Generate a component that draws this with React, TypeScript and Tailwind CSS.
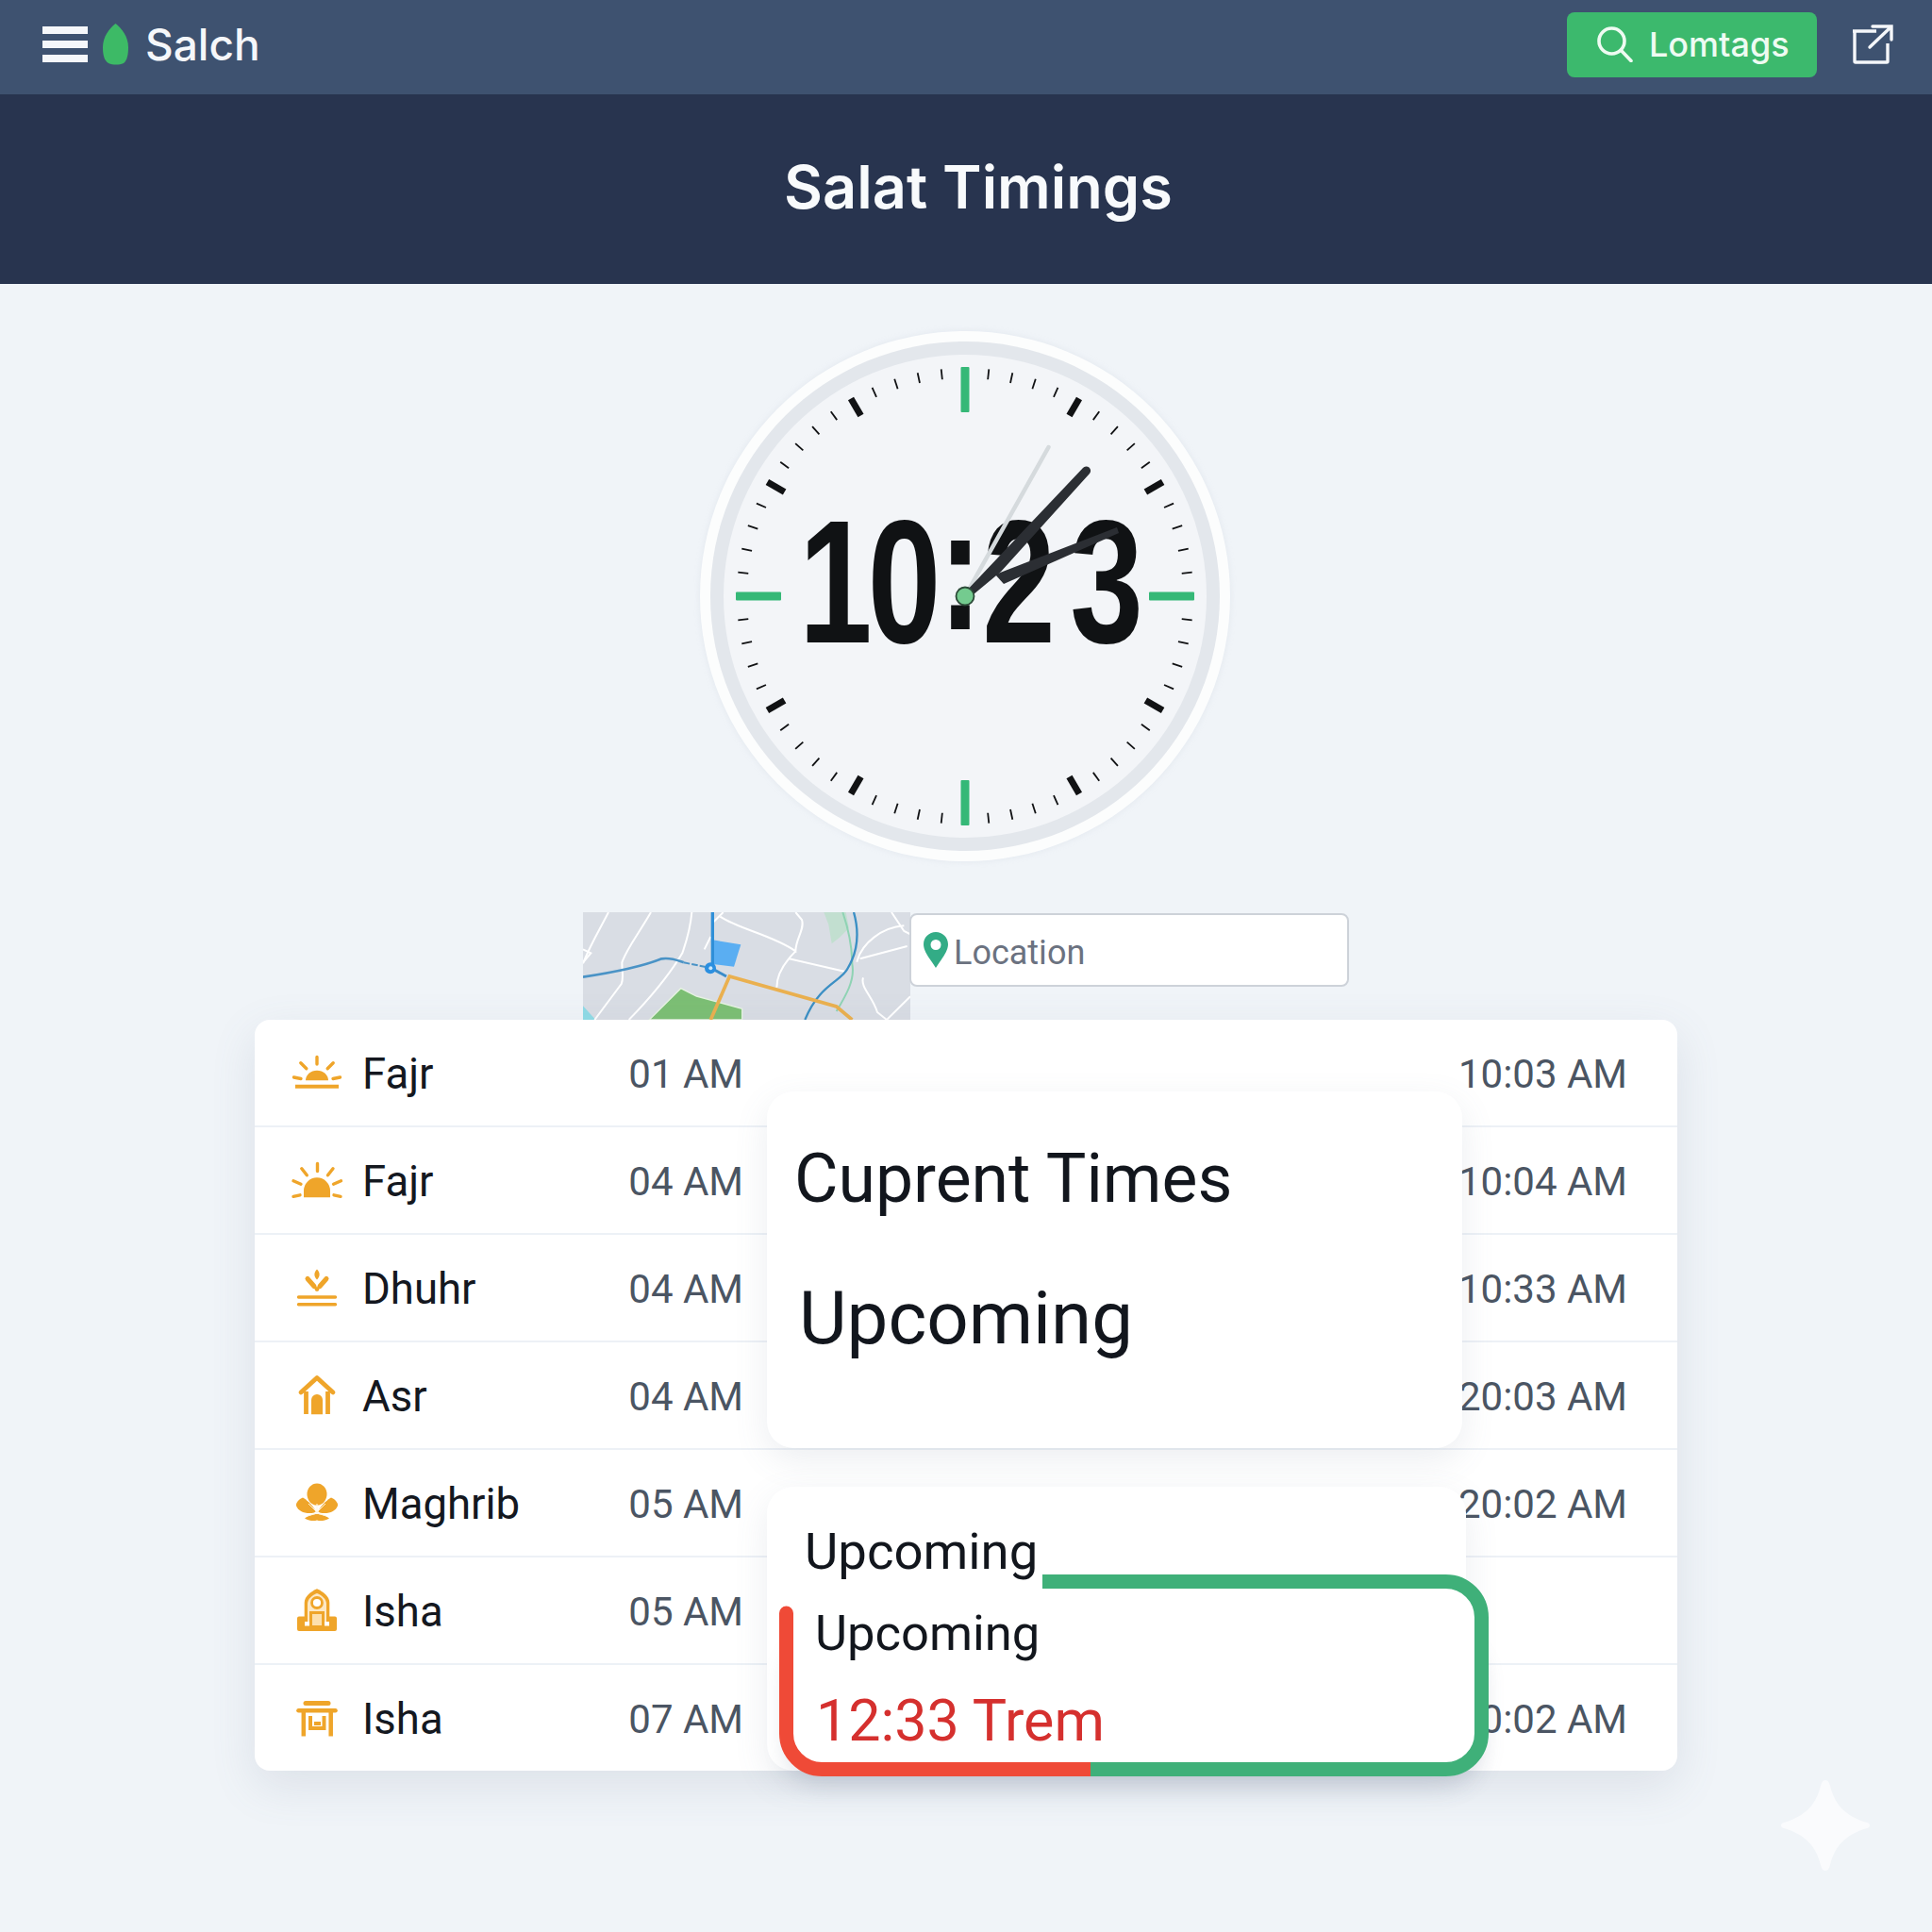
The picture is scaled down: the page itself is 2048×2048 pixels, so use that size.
import React from "react";

const amber = "#efa52a";

function IconFajr1() {
  return (
    <svg viewBox="0 0 60 60" className="w-[60px] h-[60px]" fill="none" stroke={amber} strokeLinecap="round" strokeWidth="3.4">
      <path d="M30 13.500v7.500M12.800 19.800l6 6M47.200 19.800l-6 6M5.500 35l7.500 1.500M54.500 35l-7.500 1.500" />
      <path d="M18 38.300a12 10.600 0 0 1 24 0z" fill={amber} stroke="none" />
      <path d="M7 44.700h46" strokeWidth="4" strokeLinecap="butt" />
    </svg>
  );
}
function IconFajr2() {
  return (
    <svg viewBox="0 0 60 60" className="w-[60px] h-[60px]" fill="none" stroke={amber} strokeLinecap="round" strokeWidth="3.4">
      <path d="M30.500 12.500v8M13.800 17.800l5.500 7M47 17.800l-5.500 7M5 30.800l8 3.400M55.500 30.800l-8 3.400M5 47.300l7-1.500M55 47.300l-7-1.500" />
      <path d="M16 48.300v-7a14 14 0 0 1 28 0v7z" fill={amber} stroke="none" />
    </svg>
  );
}
function IconDhuhr() {
  return (
    <svg viewBox="0 0 60 60" className="w-[60px] h-[60px]" fill="none" stroke={amber} strokeLinecap="round">
      <path d="M30 10.500c-3.500 3.500-3.500 7.500 0 11 3.500-3.500 3.500-7.500 0-11z" fill={amber} stroke="none" />
      <path d="M20 20.500l7 8M40 20.500l-7 8" strokeWidth="5" />
      <circle cx="30" cy="31.500" r="2.400" fill={amber} stroke="none" />
      <path d="M10.500 40h39M10.500 47.700h39" strokeWidth="3.400" />
    </svg>
  );
}
function IconAsr() {
  return (
    <svg viewBox="0 0 60 60" className="w-[60px] h-[60px]" fill="none" stroke={amber} strokeLinejoin="round" strokeLinecap="round">
      <path d="M13 27L30 11.500 47 27" strokeWidth="4.800" />
      <path d="M18.500 26v24M41.500 26v24" strokeWidth="4.800" strokeLinecap="butt" />
      <path d="M24 50.300V35a6 6 0 0 1 12 0v15.300z" fill={amber} stroke="none" />
    </svg>
  );
}
function IconMaghrib() {
  return (
    <svg viewBox="0 0 60 60" className="w-[60px] h-[60px]">
      <ellipse cx="30" cy="21" rx="10.500" ry="11.500" fill={amber} />
      <path d="M29 39C24 31 18 26 15 24.500 11 26 7.500 30 8 33c2 6.500 11 9.500 19 7.500z" fill={amber} />
      <path d="M31 39c5-8 11-13 14-14.500 4 1.500 7.500 5.500 7 8.500-2 6.500-11 9.500-19 7.500z" fill={amber} />
      <path d="M17 46.500c5-3.500 10-4.500 13-4.500s8 1 13 4.500c-5 3-10 3-13 2-3 1-8 1-13-2z" fill={amber} />
      <path d="M30 41V31M30 40l-9-9M30 40l9-9M20 44l10-3 10 3" stroke="#fff5e0" strokeWidth="1" fill="none" />
    </svg>
  );
}
function IconIsha1() {
  return (
    <svg viewBox="0 0 60 60" className="w-[60px] h-[60px]" fill="none">
      <path d="M16.700 42V22C16.700 15 24 10 30 7.300 36 10 43.300 15 43.300 22v20z" fill={amber} />
      <path d="M20 42V23c0-5 5-9 10-11 5 2 10 6 10 11v19z" fill="#fde8c4" />
      <circle cx="30" cy="22" r="5.500" stroke={amber} strokeWidth="2.800" fill="#fff" />
      <path d="M9 38.500a2 2 0 0 1 2-2h6v10h26v-10h6a2 2 0 0 1 2 2V50a2 2 0 0 1-2 2H11a2 2 0 0 1-2-2z" fill={amber} />
      <path d="M22 31h16v16H22z" fill={amber} />
      <path d="M25 34h10v12H25z" fill="#fde0ae" />
    </svg>
  );
}
function IconIsha2() {
  return (
    <svg viewBox="0 0 60 60" className="w-[60px] h-[60px]" fill="none" stroke={amber}>
      <path d="M18 14.500h24" strokeWidth="5" strokeLinecap="round" />
      <path d="M10.500 22.300h39" strokeWidth="4.600" strokeLinecap="round" />
      <path d="M15.800 23v26.500M44.700 23v26.500" strokeWidth="4.500" />
      <path d="M23 28v13h14.500V28" strokeWidth="4" />
      <path d="M27 36h7" strokeWidth="4" />
    </svg>
  );
}

const rows = [
  { Icon: IconFajr1, name: "Fajr", mid: "01 AM", right: "10:03 AM" },
  { Icon: IconFajr2, name: "Fajr", mid: "04 AM", right: "10:04 AM" },
  { Icon: IconDhuhr, name: "Dhuhr", mid: "04 AM", right: "10:33 AM" },
  { Icon: IconAsr, name: "Asr", mid: "04 AM", right: "20:03 AM" },
  { Icon: IconMaghrib, name: "Maghrib", mid: "05 AM", right: "20:02 AM" },
  { Icon: IconIsha1, name: "Isha", mid: "05 AM", right: "" },
  { Icon: IconIsha2, name: "Isha", mid: "07 AM", right: "10:02 AM" },
];

function ClockFace() {
  const ticks = [];
  for (let i = 0; i < 60; i++) {
    if (i % 15 === 0) continue;
    const major = i % 5 === 0;
    ticks.push(
      <line
        key={i}
        x1="281"
        x2="281"
        y1={281 - 242}
        y2={major ? 281 - 221 : 281 - 231}
        stroke="#111214"
        strokeWidth={major ? 7 : 1.8}
        transform={`rotate(${i * 6} 281 281)`}
      />
    );
  }
  return (
    <svg viewBox="0 0 562 562" className="absolute inset-0 w-[562px] h-[562px]">
      {ticks}
      {[0, 90, 180, 270].map((a) => (
        <rect key={a} x="276.500" y="38" width="9" height="48" rx="1" fill="#35b877" transform={`rotate(${a} 281 281)`} />
      ))}
      <text
        transform="scale(0.75 1)"
        y="330"
        x="140 237 337 399 523"
        dy="0 0 -14 14 0"
        fontSize="186"
        fontWeight="700"
        fontFamily="'Liberation Sans', sans-serif"
        fill="#101214"
      >
        10:23
      </text>
      <line x1="281" y1="281" x2="369.500" y2="123" stroke="#d5dadd" strokeWidth="4.500" strokeLinecap="round" />
      <path d="M279 279L406 145a4.500 4.500 0 0 1 7 6L319 255 284 284z" fill="#2b2e33" />
      <path d="M313 258L442 208l2 6L322 268z" fill="#2b2e33" />
      <circle cx="281" cy="281" r="9.500" fill="#74cb8f" stroke="#2c4a38" strokeWidth="1.800" />
    </svg>
  );
}

function MapThumb() {
  return (
    <div className="w-[347px] h-[114px] bg-[#d9dde4] overflow-hidden">
      <svg viewBox="24 22 1041 342" className="w-[347px] h-[114px]" fill="none">
        <path d="M24 320l40 44H24z" fill="#8fdbe6" />
        <path d="M235 364l100-100 50 25 145 40v35z" fill="#7cbf74" stroke="#e6f3e2" strokeWidth="4" />
        <path d="M790 22h70l10 50-30 30-25 20-10-60z" fill="#c2dfd0" />
        <g stroke="#ffffff" strokeWidth="6">
          <path d="M105 22C70 90 45 130 24 185M240 22c-40 70-80 120-92 160 0 30 6 50-2 68l-85 114" />
          <path d="M370 22c-5 60-20 100-30 130-30 50-90 130-170 212M460 36c60 40 170 60 240 110 0-40 30-70 20-100l-20-24" />
          <path d="M700 146c-30 30-60 70-60 115M680 170l175 40M430 100l-20 40M470 22l-30 30M24 140l25 12-25 30" />
          <path d="M895 180c15-60 80-110 150-115M905 170l150-40M915 230c-10 30 30 60 45 110l30 24M1005 22l40 60 20 10M1065 290l-75 74" />
        </g>
        <path d="M850 22c20 60 30 120 30 165 10 50-20 100-50 150" stroke="#8fd3b4" strokeWidth="6" />
        <path d="M885 22c20 70 10 130-20 180-20 40-90 50-135 162" stroke="#3b8fc4" strokeWidth="7" />
        <path d="M24 228c100-15 180-30 250-58 30-5 50 5 70 12" stroke="#4a93c6" strokeWidth="8" />
        <path d="M344 182l70 14" stroke="#4a93c6" strokeWidth="6" strokeDasharray="20 6" />
        <path d="M436 110l90 15-22 70-70-8z" fill="#5aaef2" />
        <path d="M436 22v180" stroke="#2f8fd8" strokeWidth="10" />
        <path d="M436 202l44 24" stroke="#3a8cc9" strokeWidth="9" />
        <path d="M430 364l60-138 340 96 50 42" stroke="#eab04f" strokeWidth="11" />
        <circle cx="429" cy="200" r="18" fill="#2b8fe0" />
        <circle cx="430" cy="200" r="6" fill="#c9e7fb" />
      </svg>
    </div>
  );
}

export default function App() {
  return (
    <div className="relative w-[2048px] h-[2048px] bg-[#f0f4f8] font-['Inter','Liberation_Sans',sans-serif] overflow-hidden flex flex-col">
      <header className="h-[100px] bg-[#3e5270] flex items-center pl-[45px] pr-[41px] pb-[6px]">
        <div className="w-[48px] flex flex-col gap-[7px]">
          <span className="h-[8px] bg-[#f5f7fa]" />
          <span className="h-[8px] bg-[#f5f7fa]" />
          <span className="h-[8px] bg-[#f5f7fa]" />
        </div>
        <svg viewBox="0 0 27 44" className="w-[27px] h-[44px] ml-[16px]">
          <path d="M13.500 0C20 5 27 14 27 25c0 7-1 14-5 17-5 2-11 2-16 0C1 39 0 32 0 25 0 14 7 5 13.500 0z" fill="#3dba66" />
        </svg>
        <span className="ml-[18px] text-[46px] font-medium text-[#f5f7fa] leading-none">Salch</span>
        <div className="ml-auto w-[265px] h-[69px] rounded-[8px] bg-[#3cb96d] flex items-center pl-[32px] gap-[17px]">
          <svg viewBox="0 0 38 38" className="w-[38px] h-[38px]" fill="none" stroke="#eefbf2" strokeWidth="3.600" strokeLinecap="round">
            <circle cx="15.500" cy="15.500" r="13.500" />
            <path d="M25.500 25.500L36 36.500" />
          </svg>
          <span className="text-[36px] font-medium text-[#eefbf2] leading-none">Lomtags</span>
        </div>
        <svg viewBox="0 0 44 42" className="ml-[37px] w-[44px] h-[42px]" fill="none" stroke="#f5f7fa" strokeWidth="3.400">
          <path d="M1 7h25M3 7v32a1 1 0 0 0 1 1h33a1 1 0 0 0 1-1V20" />
          <path d="M22 2h20v14M41 3L19 24" strokeLinecap="round" />
        </svg>
      </header>

      <div className="h-[201px] bg-[#28344f] flex items-center justify-center pl-[26px] pb-[5px]">
        <h1 className="text-[63px] font-semibold text-[#f8fafc] leading-none">Salat Timings</h1>
      </div>

      <main className="flex flex-col items-center pt-[50px]">
        <div className="relative w-[562px] h-[562px] -ml-[2px] rounded-full bg-[#fcfdfd] p-[11px] shadow-[0_0_6px_rgba(200,210,220,0.35)]">
          <div className="w-full h-full rounded-full bg-[#e3e7ec] p-[14px]">
            <div className="w-full h-full rounded-full bg-[#f3f5f8]" />
          </div>
          <ClockFace />
        </div>

        <div className="mt-[54px] self-start ml-[618px] flex items-start">
          <MapThumb />
          <div className="w-[466px] h-[78px] -ml-[1px] mt-[1px] bg-white border-2 border-[#cdd2d9] rounded-[8px] flex items-center pl-[13px] gap-[6px]">
            <svg viewBox="0 0 26 38" className="w-[26px] h-[38px]">
              <path fillRule="evenodd" d="M13 0C6 0 0 5.500 0 13c0 8 8 17 13 25 5-8 13-17 13-25C26 5.500 20 0 13 0zm0 8a5.500 5.500 0 1 1 0 11 5.500 5.500 0 0 1 0-11z" fill="#33ac86" />
            </svg>
            <span className="pt-[6px] text-[36px] text-[#6b7280] leading-none font-['Roboto',sans-serif]">Location</span>
          </div>
        </div>

        <section className="relative self-start ml-[270px] w-[1508px] bg-white rounded-[16px] shadow-[0_16px_48px_rgba(100,116,139,0.14)]">
          {rows.map(({ Icon, name, mid, right }, i) => (
            <div key={i} className={`flex items-center pl-[36px] pr-[53px] ${i < 6 ? "h-[114px] border-b-2 border-[#edf1f6]" : "h-[111.600px]"}`}>
              <Icon />
              <span className="ml-[18px] mt-[4px] w-[270px] text-[45.500px] text-[#14181f] leading-none font-['Roboto',sans-serif]">{name}</span>
              <span className="mt-[4px] w-[134px] text-right text-[42px] text-[#4b5563] leading-none font-['Roboto',sans-serif]">{mid}</span>
              <span className="mt-[4px] ml-auto text-[42px] text-[#4b5563] leading-none font-['Roboto',sans-serif]">{right}</span>
            </div>
          ))}

          <div className="absolute left-[543px] top-[76px] w-[737px] h-[378px] bg-white rounded-[28px] shadow-[0_12px_36px_rgba(100,116,139,0.12)] pl-[29px] pt-[50px] font-['Roboto',sans-serif] text-[#12161d]">
            <p className="text-[71.500px] leading-[86px]">Cuprent Times</p>
            <p className="ml-[5px] mt-[61px] text-[78px] leading-[88px]">Upcoming</p>
          </div>

          <div className="absolute left-[543px] top-[495px] w-[741px] h-[301px] bg-white rounded-[28px] shadow-[0_12px_36px_rgba(100,116,139,0.12)] pl-[40px] pt-[35px] font-['Roboto',sans-serif] text-[#12161d]">
            <p className="text-[54.500px] leading-[66px]">Upcoming</p>
          </div>

          <div className="absolute left-[556px] top-[588px] w-[752px] h-[214px] pl-[38px] pt-[31px] font-['Roboto',sans-serif]">
            <div className="absolute left-0 right-0 top-[50px] bottom-0 rounded-[45px] shadow-[0_16px_24px_-8px_rgba(100,116,139,0.22)]" />
            <svg viewBox="0 0 752 214" className="absolute left-0 top-0 w-[752px] h-[214px]" fill="none" strokeWidth="15">
              <path d="M7.500 41H279V7.500H706.500a38 38 0 0 1 38 38V168.500a38 38 0 0 1-38 38H45.500a38 38 0 0 1-38-38z" fill="#ffffff" stroke="none" />
              <path d="M7.500 41V168.500a38 38 0 0 0 38 38H330" stroke="#ef4a37" strokeLinecap="round" />
              <path d="M279 7.500H706.500a38 38 0 0 1 38 38V168.500a38 38 0 0 1-38 38H330" stroke="#3fb079" />
            </svg>
            <p className="relative text-[52.500px] leading-[62px] text-[#12161d]">Upcoming</p>
            <p className="relative mt-[29px] ml-[1px] text-[61px] leading-[66px] text-[#d5302e]">12:33 Trem</p>
          </div>
        </section>
      </main>

      <svg viewBox="0 0 100 100" className="absolute left-[1885px] top-[1885px] w-[100px] h-[100px]">
        <path d="M50 2c3 0 4 3 5 6 5 20 16 32 39 39 4 1 4 5 0 6-23 7-34 19-39 39-1 3-2 6-5 6s-4-3-5-6c-5-20-16-32-39-39-4-1-4-5 0-6 23-7 34-19 39-39 1-3 2-6 5-6z" fill="#fafbfd" />
      </svg>
    </div>
  );
}
